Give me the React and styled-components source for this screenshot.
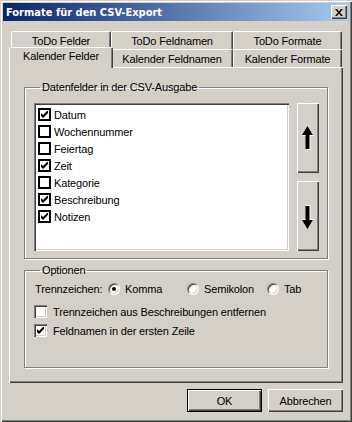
import React from 'react';
import styled, { createGlobalStyle } from 'styled-components';

const face = '#d4d0c8';
const shadow = '#808080';
const dark = '#404040';

const GlobalStyle = createGlobalStyle`
    html, body {
        margin: 0;
        padding: 0;
        background: ${face};
    }
`

const raised = `
    box-shadow: inset 1px 1px 0 #fff, inset -1px -1px 0 ${dark}, inset -2px -2px 0 ${shadow};
`
const sunken = `
    box-shadow: inset 1px 1px 0 ${shadow}, inset 2px 2px 0 ${dark}, inset -1px -1px 0 #fff, inset -2px -2px 0 ${face};
`

const Window = styled.div`
    width: 352px;
    height: 422px;
    box-sizing: border-box;
    padding: 3px;
    background: ${face};
    box-shadow: inset 1px 1px 0 ${face}, inset 2px 2px 0 #fff, inset -1px -1px 0 ${dark}, inset -2px -2px 0 ${shadow};
    display: flex;
    flex-direction: column;
    font-family: "Liberation Sans", Arial, sans-serif;
    font-size: 11px;
    letter-spacing: -0.15px;
    color: #000;
`
const TitleBar = styled.div`
    height: 18px;
    display: flex;
    align-items: center;
    justify-content: space-between;
    padding: 0 2px;
    background: linear-gradient(to right, #0a246a, #a6caf0);
`
const TitleText = styled.span`
    color: #fff;
    font-weight: bold;
    font-size: 11px;
    letter-spacing: 0;
    font-family: "DejaVu Sans Condensed", "DejaVu Sans", sans-serif;
    margin-left: 1px;
`
const CloseButton = styled.div`
    width: 16px;
    height: 14px;
    background: ${face};
    ${raised}
    display: flex;
    align-items: center;
    justify-content: center;
`
const Body = styled.div`
    display: flex;
    flex-direction: column;
    padding: 10px 6px 0 6px;
`
const TabStrip = styled.div`
    display: flex;
    flex-direction: column;
    padding-left: 2px;
`
const TabRow = styled.div`
    display: flex;
    height: 18px;
    align-items: flex-end;
`
const Tab = styled.div`
    box-sizing: border-box;
    width: ${p => p.$w}px;
    height: ${p => p.$active ? 21 : 18}px;
    margin: ${p => p.$active ? '-2px -2px -1px -2px' : '0'};
    position: relative;
    z-index: ${p => p.$active ? 1 : 0};
    background: ${face};
    border-top: 1px solid #fff;
    border-left: 1px solid #fff;
    border-right: 1px solid ${dark};
    border-radius: 2px 2px 0 0;
    box-shadow: inset -1px 0 0 ${shadow};
    display: flex;
    align-items: center;
    justify-content: center;
    padding-top: ${p => p.$active ? 0 : 1}px;
    padding-bottom: ${p => p.$active ? 4 : 0}px;
    white-space: nowrap;
`
const Panel = styled.div`
    height: 316px;
    box-sizing: border-box;
    padding: 14px 15px 0 15px;
    background: ${face};
    box-shadow: inset 1px 1px 0 #fff, inset -1px -1px 0 ${dark}, inset -2px -2px 0 ${shadow};
    display: flex;
    flex-direction: column;
`
const Group = styled.fieldset`
    margin: ${p => p.$gap || 0}px 0 0 0;
    box-sizing: border-box;
    height: ${p => p.$h}px;
    width: 304px;
    border: 1px solid ${shadow};
    box-shadow: 1px 1px 0 #fff, inset 1px 1px 0 #fff;
    padding: ${p => p.$pad};
    min-width: 0;
    legend {
        padding: 0 2px;
        margin-left: 6px;
        line-height: 13px;
    }
`
const FieldRow = styled.div`
    display: flex;
    gap: 8px;
`
const ListBox = styled.div`
    width: 255px;
    height: 148px;
    box-sizing: border-box;
    background: #fff;
    ${sunken}
    padding: 3px 4px;
`
const ListItem = styled.div`
    height: 17px;
    display: flex;
    align-items: center;
    gap: 3px;
`
const FlatBox = styled.span`
    width: 13px;
    height: 13px;
    box-sizing: border-box;
    border: 2px solid #000;
    background: #fff;
    display: flex;
    align-items: center;
    justify-content: center;
`
const SideButtons = styled.div`
    display: flex;
    flex-direction: column;
    gap: 8px;
`
const MoveButton = styled.div`
    width: 22px;
    height: 70px;
    background: ${face};
    ${raised}
    display: flex;
    align-items: center;
    justify-content: center;
`
const OptionRow = styled.div`
    height: 15px;
    display: flex;
    align-items: center;
    margin-top: ${p => p.$mt || 0}px;
`
const RowLabel = styled.span`
    width: 74px;
    padding-left: 1px;
    box-sizing: border-box;
`
const RadioOption = styled.label`
    width: ${p => p.$w ? `${p.$w}px` : 'auto'};
    display: flex;
    align-items: center;
    gap: 5px;
`
const Radio = styled.span`
    width: 12px;
    height: 12px;
    box-sizing: border-box;
    border-radius: 50%;
    background: #fff;
    border: 1px solid;
    border-color: ${shadow} #fff #fff ${shadow};
    box-shadow: inset 1px 1px 0 ${dark}, inset -1px -1px 0 ${face};
    display: flex;
    align-items: center;
    justify-content: center;
    &::after {
        content: '';
        display: ${p => p.$on ? 'block' : 'none'};
        width: 4px;
        height: 4px;
        border-radius: 50%;
        background: #000;
    }
`
const CheckLabel = styled.label`
    display: flex;
    align-items: center;
    gap: 6px;
`
const Box3D = styled.span`
    width: 13px;
    height: 13px;
    box-sizing: border-box;
    background: #fff;
    ${sunken}
    display: flex;
    align-items: center;
    justify-content: center;
`
const Footer = styled.div`
    display: flex;
    justify-content: flex-end;
    gap: 6px;
    margin-top: 6px;
`
const Button = styled.div`
    width: 75px;
    height: 23px;
    box-sizing: border-box;
    background: ${face};
    display: flex;
    align-items: center;
    justify-content: center;
    ${p => p.$default
        ? `border: 1px solid #000; box-shadow: inset 1px 1px 0 #fff, inset -1px -1px 0 ${dark}, inset -2px -2px 0 ${shadow};`
        : raised}
`

const Check = () => (
    <svg width="7" height="7" viewBox="0 0 7 7">
        <polygon points="0,2 2,4 7,-1 7,2 2,7 0,5" fill="#000" />
    </svg>
)

const Arrow = ({ down }) => (
    <svg width="13" height="25" viewBox="0 0 13 25" style={down ? { transform: 'scaleY(-1)' } : null}>
        <polygon points="6.5,1 12,10 8.5,10 8.5,24 4.5,24 4.5,10 1,10" fill="#fff" />
        <polygon points="5.5,0 11,9 7.5,9 7.5,23 3.5,23 3.5,9 0,9" fill="#000" />
    </svg>
)

const fields = [
    ['Datum', true],
    ['Wochennummer', false],
    ['Feiertag', false],
    ['Zeit', true],
    ['Kategorie', false],
    ['Beschreibung', true],
    ['Notizen', true],
]

const App = () => {
    return (
        <Window>
            <GlobalStyle />
            <TitleBar>
                <TitleText>Formate für den CSV-Export</TitleText>
                <CloseButton>
                    <svg width="8" height="7" viewBox="0 0 8 7">
                        <path d="M0,0 L2,0 L4,2.5 L6,0 L8,0 L5,3.5 L8,7 L6,7 L4,4.5 L2,7 L0,7 L3,3.5 Z" fill="#000" />
                    </svg>
                </CloseButton>
            </TitleBar>
            <Body>
                <TabStrip>
                    <TabRow>
                        <Tab $w={100}>ToDo Felder</Tab>
                        <Tab $w={122}>ToDo Feldnamen</Tab>
                        <Tab $w={109}>ToDo Formate</Tab>
                    </TabRow>
                    <TabRow>
                        <Tab $w={104} $active>Kalender Felder</Tab>
                        <Tab $w={122}>Kalender Feldnamen</Tab>
                        <Tab $w={109}>Kalender Formate</Tab>
                    </TabRow>
                </TabStrip>
                <Panel>
                    <Group $h={178} $pad="9px 8px 7px 9px">
                        <legend>Datenfelder in der CSV-Ausgabe</legend>
                        <FieldRow>
                            <ListBox>
                                {fields.map(([name, on]) => (
                                    <ListItem key={name}>
                                        <FlatBox>{on && <Check />}</FlatBox>
                                        <span>{name}</span>
                                    </ListItem>
                                ))}
                            </ListBox>
                            <SideButtons>
                                <MoveButton><Arrow /></MoveButton>
                                <MoveButton><Arrow down /></MoveButton>
                            </SideButtons>
                        </FieldRow>
                    </Group>
                    <Group $h={104} $gap={5} $pad="4px 8px 0 9px">
                        <legend>Optionen</legend>
                        <OptionRow>
                            <RowLabel>Trennzeichen:</RowLabel>
                            <RadioOption $w={79}><Radio $on />Komma</RadioOption>
                            <RadioOption $w={80}><Radio />Semikolon</RadioOption>
                            <RadioOption><Radio />Tab</RadioOption>
                        </OptionRow>
                        <OptionRow $mt={8}>
                            <CheckLabel><Box3D />Trennzeichen aus Beschreibungen entfernen</CheckLabel>
                        </OptionRow>
                        <OptionRow $mt={4}>
                            <CheckLabel><Box3D><Check /></Box3D>Feldnamen in der ersten Zeile</CheckLabel>
                        </OptionRow>
                    </Group>
                </Panel>
                <Footer>
                    <Button $default>OK</Button>
                    <Button>Abbrechen</Button>
                </Footer>
            </Body>
        </Window>
    );
};

export default App;
